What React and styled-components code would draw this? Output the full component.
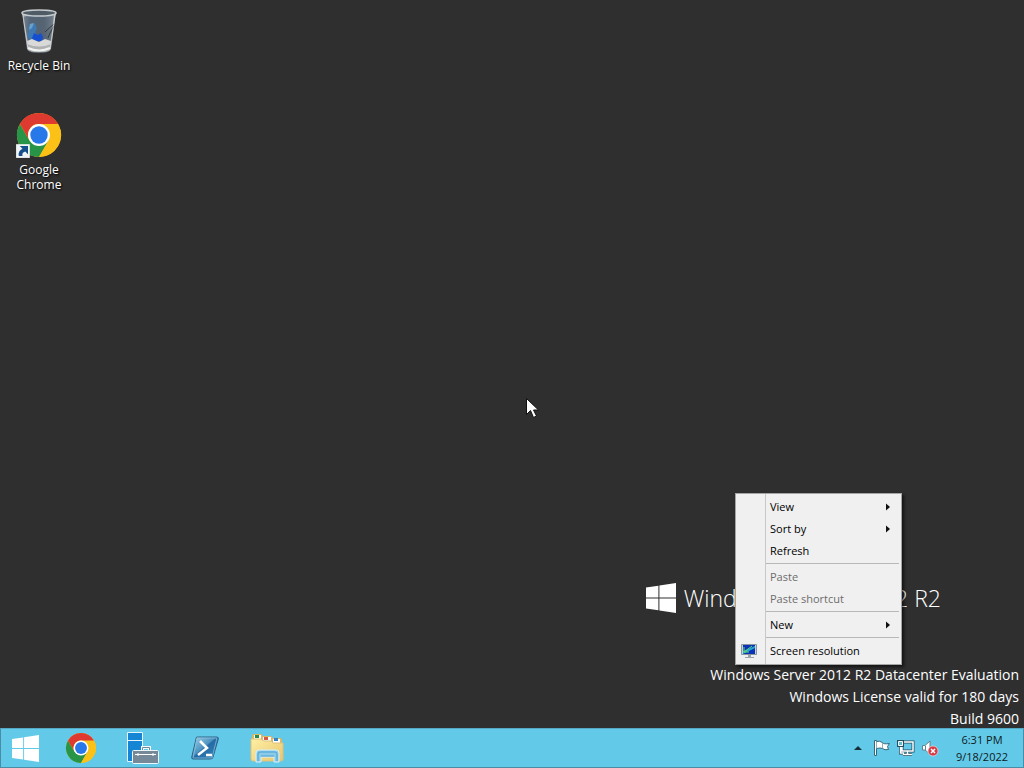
import React, { Component } from "react";
import styled, { createGlobalStyle } from "styled-components";

const GlobalStyle = createGlobalStyle`
  * {
    box-sizing: border-box;
  }

  body {
    margin: 0;
    background: #2f2f2f;
    font-family: "Open Sans", "Noto Sans", sans-serif;
    font-size: 12px;
  }

  button {
    border: 0;
    padding: 0;
    background: none;
    font: inherit;
    color: inherit;
  }
`;

const Screen = styled.div`
  display: flex;
  flex-direction: column;
  height: 100vh;
  overflow: hidden;
`;

const Desktop = styled.main`
  position: relative;
  flex: 1;
  padding-top: 7px;
  background: #2f2f2f;
`;

const ShortcutList = styled.div`
  display: flex;
  flex-direction: column;
  width: 78px;
`;

const Shortcut = styled.button`
  display: flex;
  flex-direction: column;
  align-items: center;
  gap: 3px;
  height: 104px;
  color: #fff;
  line-height: 15px;
  text-shadow: 1px 1px 2px #000;
`;

const ShortcutIcon = styled.span`
  display: flex;
  align-items: center;
  height: 48px;
`;

const ShortcutLabel = styled.span`
  width: ${props => (props.$narrow ? "50px" : "auto")};
  white-space: ${props => (props.$narrow ? "normal" : "nowrap")};
`;

const Branding = styled.div`
  position: absolute;
  right: 83px;
  bottom: 113px;
  display: flex;
  align-items: center;
  gap: 8px;
  color: #fff;
  font-size: 23px;
  font-weight: 300;
  line-height: 34px;
  white-space: nowrap;
`;

const Watermark = styled.div`
  position: absolute;
  right: 5px;
  bottom: -2px;
  color: #fff;
  font-size: 14px;
  line-height: 22px;
  text-align: right;
`;

const Menu = styled.div`
  position: absolute;
  left: 735px;
  top: 493px;
  width: 167px;
  padding: 2px;
  border: 1px solid #a5a5a5;
  background: linear-gradient(to right, transparent 29px, #c8c8c8 29px, #c8c8c8 30px, transparent 30px) #f0f0f0;
  box-shadow: 2px 2px 3px rgba(0, 0, 0, 0.6);
  font-size: 11px;
`;

const MenuItem = styled.button`
  display: flex;
  align-items: center;
  width: 100%;
  height: 22px;
  color: #000;
  text-align: left;
  white-space: nowrap;

  &:disabled {
    color: #6d6d6d;
  }
`;

const MenuIcon = styled.span`
  display: flex;
  flex: none;
  justify-content: center;
  width: 22px;
  margin-right: 10px;
`;

const MenuLabel = styled.span`
  flex: 1;
  padding-bottom: 2px;
`;

const MenuArrow = styled.svg`
  flex: none;
  margin-right: 8px;
`;

const Separator = styled.hr`
  height: 1px;
  margin: 1px 0 2px 28px;
  border: 0;
  background: #b8b8b8;
`;

const Pointer = styled.svg`
  position: absolute;
  left: 526px;
  top: 398px;
`;

const Taskbar = styled.footer`
  display: flex;
  flex: none;
  height: 40px;
  border: 1px solid #4b8da5;
  border-top-color: #55a9c5;
  background: #63c9e9;
`;

const TaskButton = styled.button`
  display: flex;
  align-items: center;
  justify-content: center;
  width: ${props => (props.$start ? "49px" : "62px")};
`;

const Tray = styled.div`
  display: flex;
  align-items: center;
  margin-left: auto;
`;

const TrayButton = styled.button`
  display: flex;
  align-items: center;
  justify-content: center;
  width: 24px;
  height: 100%;
`;

const Clock = styled.button`
  width: 81px;
  padding-right: 1px;
  color: #101b20;
  font-size: 11px;
  line-height: 17px;
`;

const RecycleBin = () => (
  <svg width="40" height="48" viewBox="0 0 40 48" aria-hidden="true">
    <defs>
      <linearGradient id="glass" x1="0" x2="1" y1="0" y2="0">
        <stop offset="0" stopColor="#b6bcc2" />
        <stop offset=".25" stopColor="#65727f" />
        <stop offset=".65" stopColor="#667078" />
        <stop offset=".85" stopColor="#92989e" />
        <stop offset="1" stopColor="#c9cdd0" />
      </linearGradient>
    </defs>
    <g transform="translate(0 1)">
      <path d="M3 4h34l-5 37q-1 4-12 4T8 41Z" fill="url(#glass)" />
      <path d="M4 9l12-3 7 3 12-3-3 27H9Z" fill="#47596d" opacity=".55" />
      <path d="M9 19l3-4 4 1 2 4-2 4 3 4-2 5-6-1-3-5 2-3Z" fill="#3f79b4" />
      <path d="M15 25l4 2 3-2 2 4-1 4-8 1-2-4Z" fill="#164ed0" />
      <path d="M11 16l4-1-2 5-3 2Z" fill="#69a1c7" />
      <path d="M35 16q-5 4-9 8M35 18q-5 8-6 12" fill="none" stroke="#343a40" />
      <path d="M8 33l5-2 7 3 6-3 6 2-1 8q-1 3-11 3T9 41Z" fill="#d9d9d7" />
      <path d="M8 36q12 5 24 0l-1 5q-1 3-11 3T9 41Z" fill="#aeb2b3" />
      <path d="M4 7l5 34M36 7l-5 34" stroke="#d8dcde" opacity=".7" />
      <path d="M9 40q11 5 22 0" fill="none" stroke="#f1f1ef" strokeWidth="2" />
      <ellipse cx="20" cy="5" rx="17" ry="3" fill="#505c65" stroke="#c6ccd0" strokeWidth="1.5" />
    </g>
  </svg>
);

const ChromeLogo = ({ size, shortcut }) => (
  <svg width={size} height={size} viewBox="0 0 48 48" overflow="visible" aria-hidden="true">
    <circle cx="24" cy="24" r="24" fill="#fbc116" />
    <path d="M3.2 12A24 24 0 0 0 24 48l10.4-18L24 24l-10.4 6Z" fill="#279447" />
    <path d="M24 12h20.8A24 24 0 0 1 24 48l10.4-18Z" fill="#fbc116" />
    <path d="M3.2 12l10.4 18A12 12 0 0 1 24 12h20.8A24 24 0 0 0 3.2 12Z" fill="#df3a2f" />
    <circle cx="24" cy="24" r="12" fill="#fff" />
    <circle cx="24" cy="24" r="9.5" fill="#2878e9" />
    {shortcut && (
      <g>
        <path d="M-1 34h15v15H-1Z" fill="#f1f4f6" />
        <path d="M2 47q-1-6 4-8l-3-3h9v9l-3-3q-4 1-3 5Z" fill="#164f8c" />
      </g>
    )}
  </svg>
);

const WindowsLogo = ({ size }) => (
  <svg width={size} height={size} viewBox="0 0 30 30" aria-hidden="true">
    <path d="M0 4.4L12.4 2.7v11.7H0ZM13.4 2.5L30 0v14.4H13.4ZM0 15.5h12.4v11.8L0 25.6ZM13.4 15.5H30V30l-16.6-2.5Z" fill="#fff" />
  </svg>
);

const ServerManager = () => (
  <svg width="34" height="34" viewBox="0 0 34 34" aria-hidden="true">
    <path d="M1.5 1.5h15v29h-15Z" fill="#1686d4" stroke="#e5f5fb" />
    <path d="M2 9.5h14" stroke="#e5f5fb" />
    <path d="M16.5 19v-2.5h7V19" fill="none" stroke="#f3f9fb" strokeWidth="3" />
    <path d="M16.5 19v-2.5h7V19" fill="none" stroke="#728996" />
    <rect x="6.5" y="19.5" width="26" height="13" rx="1" fill="#758998" stroke="#edf7fa" />
    <path d="M9 23.5h21M12 22v3M27 22v3" stroke="#fff" />
  </svg>
);

const PowerShell = () => (
  <svg width="30" height="26" viewBox="0 0 30 26" aria-hidden="true">
    <defs>
      <linearGradient id="powershell" x1="0" x2="1" y1="0" y2="1">
        <stop offset="0" stopColor="#a6d4ec" />
        <stop offset=".45" stopColor="#4d94c1" />
        <stop offset=".5" stopColor="#246ba5" />
        <stop offset="1" stopColor="#3988bd" />
      </linearGradient>
    </defs>
    <path d="M7 2h20q2 0 1 3l-5 17q0 2-3 2H3q-2 0-1-3L6 4q0-2 1-2Z" fill="url(#powershell)" stroke="#286287" />
    <path d="M7 3h20l-5 20H3Z" fill="none" stroke="#91c5de" opacity=".7" />
    <path d="M10 6l7 7-9 7M16 20h6" fill="none" stroke="#fff" strokeWidth="2.5" />
  </svg>
);

const Explorer = () => (
  <svg width="34" height="30" viewBox="0 0 34 30" aria-hidden="true">
    <defs>
      <linearGradient id="folder" x1="0" x2="1" y1="0" y2="1">
        <stop offset="0" stopColor="#fff0a5" />
        <stop offset="1" stopColor="#e8c56d" />
      </linearGradient>
    </defs>
    <path d="M2 27V3q0-2 2-2h7l2 2h8l2 2h7q2 0 2 2v20Z" fill="#d9b866" />
    <path d="M4 2h7v6H4ZM13 4h8v5h-8ZM23 6h7v4h-7Z" fill="#fff" />
    <path d="M5 2h4v3H5Z" fill="#278b43" />
    <path d="M14 4h4v3h-4Z" fill="#d55845" />
    <path d="M24 5h4v3h-4Z" fill="#387fc1" />
    <path d="M1 6h10l3 2h7l2 2h10v16q0 2-2 2H3q-2 0-2-2Z" fill="url(#folder)" stroke="#dec17b" />
    <path d="M6 29V20q0-3 3-3h17q3 0 3 3v9h-5v-5H11v5Z" fill="#8bcbea" stroke="#d8f1fa" />
    <path d="M8 28v-7q0-2 2-2h15q2 0 2 2v7M11 23h13" fill="none" stroke="#4ba1ce" />
  </svg>
);

const Monitor = () => (
  <svg width="16" height="16" viewBox="0 0 16 16" aria-hidden="true">
    <path d="M.5 1.5h15v10H.5Z" fill="#c7d3d9" stroke="#88969d" />
    <path d="M2 2h12v9H2Z" fill="#0c32b5" />
    <path d="M2 8l5-2 7-3v2L8 8l-6 3Z" fill="#22a7cf" />
    <path d="M3 4v5h5M3 9l8-6" fill="none" stroke="#62da72" />
    <path d="M7 12h3v2h3v1H4v-1h3Z" fill="#9aa4aa" />
  </svg>
);

const Flag = () => (
  <svg width="18" height="18" viewBox="0 0 18 18" aria-hidden="true">
    <path d="M1.5 1.5h2v1q3-1 6 1 1 2 7 1l-2 3 1 3q-4 1-6-1-2-1-6 0v7h-2Z" fill="#fff" stroke="#36687c" />
    <path d="M3.5 3v7M9.5 4v5" stroke="#65889a" strokeWidth=".7" />
  </svg>
);

const Network = () => (
  <svg width="18" height="18" viewBox="0 0 18 18" aria-hidden="true">
    <path d="M5 3h11v9H5ZM10.5 12v3M6 15.5h9M3.5 7v7H7" fill="none" stroke="#254f61" strokeWidth="3" />
    <path d="M5 3h11v9H5ZM10.5 12v3M6 15.5h9M3.5 7v7H7" fill="none" stroke="#fff" strokeWidth="1.5" />
    <path d="M1.5 2.5h4v4h-4Z" fill="#62b9d6" stroke="#254f61" strokeWidth="3" />
    <path d="M1.5 2.5h4v4h-4Z" fill="#62b9d6" stroke="#fff" />
  </svg>
);

const Speaker = () => (
  <svg width="18" height="18" viewBox="0 0 18 18" aria-hidden="true">
    <path d="M1.5 6.5H4L9 2v13l-5-4H1.5Z" fill="#fff" stroke="#628493" />
    <path d="M4.5 7v4" stroke="#628493" />
    <circle cx="12" cy="12" r="5" fill="#d33c45" stroke="#f7d7da" strokeWidth=".7" />
    <path d="M10 10l4 4m0-4l-4 4" stroke="#fff" strokeWidth="1.5" />
  </svg>
);

const Item = ({ children, icon, submenu, disabled }) => (
  <MenuItem role="menuitem" disabled={disabled} aria-haspopup={submenu ? "menu" : undefined}>
    <MenuIcon>{icon}</MenuIcon>
    <MenuLabel>{children}</MenuLabel>
    {submenu && (
      <MenuArrow width="6" height="8" viewBox="0 0 6 8" aria-hidden="true">
        <path d="M1 0.5L5 4L1 7.5Z" fill="#111" />
      </MenuArrow>
    )}
  </MenuItem>
);

class App extends Component {
  render() {
    return (
      <Screen>
        <GlobalStyle />
        <Desktop>
          <ShortcutList>
            <Shortcut>
              <ShortcutIcon>
                <RecycleBin />
              </ShortcutIcon>
              <ShortcutLabel>Recycle Bin</ShortcutLabel>
            </Shortcut>
            <Shortcut>
              <ShortcutIcon>
                <ChromeLogo size="44" shortcut />
              </ShortcutIcon>
              <ShortcutLabel $narrow>Google Chrome</ShortcutLabel>
            </Shortcut>
          </ShortcutList>
          <Branding>
            <WindowsLogo size="30" />
            <span>Windows Server 2012 R2</span>
          </Branding>
          <Watermark>
            <div>Windows Server 2012 R2 Datacenter Evaluation</div>
            <div>Windows License valid for 180 days</div>
            <div>Build 9600</div>
          </Watermark>
          <Menu role="menu">
            <Item submenu>View</Item>
            <Item submenu>Sort by</Item>
            <Item>Refresh</Item>
            <Separator />
            <Item disabled>Paste</Item>
            <Item disabled>Paste shortcut</Item>
            <Separator />
            <Item submenu>New</Item>
            <Separator />
            <Item icon={<Monitor />}>Screen resolution</Item>
          </Menu>
          <Pointer width="14" height="22" viewBox="0 0 14 22" aria-hidden="true">
            <path d="M.5.5v16l4-4 3 7 3-1.5-3-6h5Z" fill="#fff" stroke="#111" />
          </Pointer>
        </Desktop>
        <Taskbar>
          <TaskButton $start aria-label="Start">
            <WindowsLogo size="27" />
          </TaskButton>
          <TaskButton aria-label="Google Chrome">
            <ChromeLogo size="30" />
          </TaskButton>
          <TaskButton aria-label="Server Manager">
            <ServerManager />
          </TaskButton>
          <TaskButton aria-label="Windows PowerShell">
            <PowerShell />
          </TaskButton>
          <TaskButton aria-label="File Explorer">
            <Explorer />
          </TaskButton>
          <Tray>
            <TrayButton aria-label="Show hidden icons">
              <svg width="8" height="4" viewBox="0 0 8 4" aria-hidden="true">
                <path d="M0 4L4 0L8 4Z" fill="#142e39" />
              </svg>
            </TrayButton>
            <TrayButton aria-label="Action Center">
              <Flag />
            </TrayButton>
            <TrayButton aria-label="Network">
              <Network />
            </TrayButton>
            <TrayButton aria-label="Volume">
              <Speaker />
            </TrayButton>
            <Clock>
              <div>6:31 PM</div>
              <div>9/18/2022</div>
            </Clock>
          </Tray>
        </Taskbar>
      </Screen>
    );
  }
}

export default App;
